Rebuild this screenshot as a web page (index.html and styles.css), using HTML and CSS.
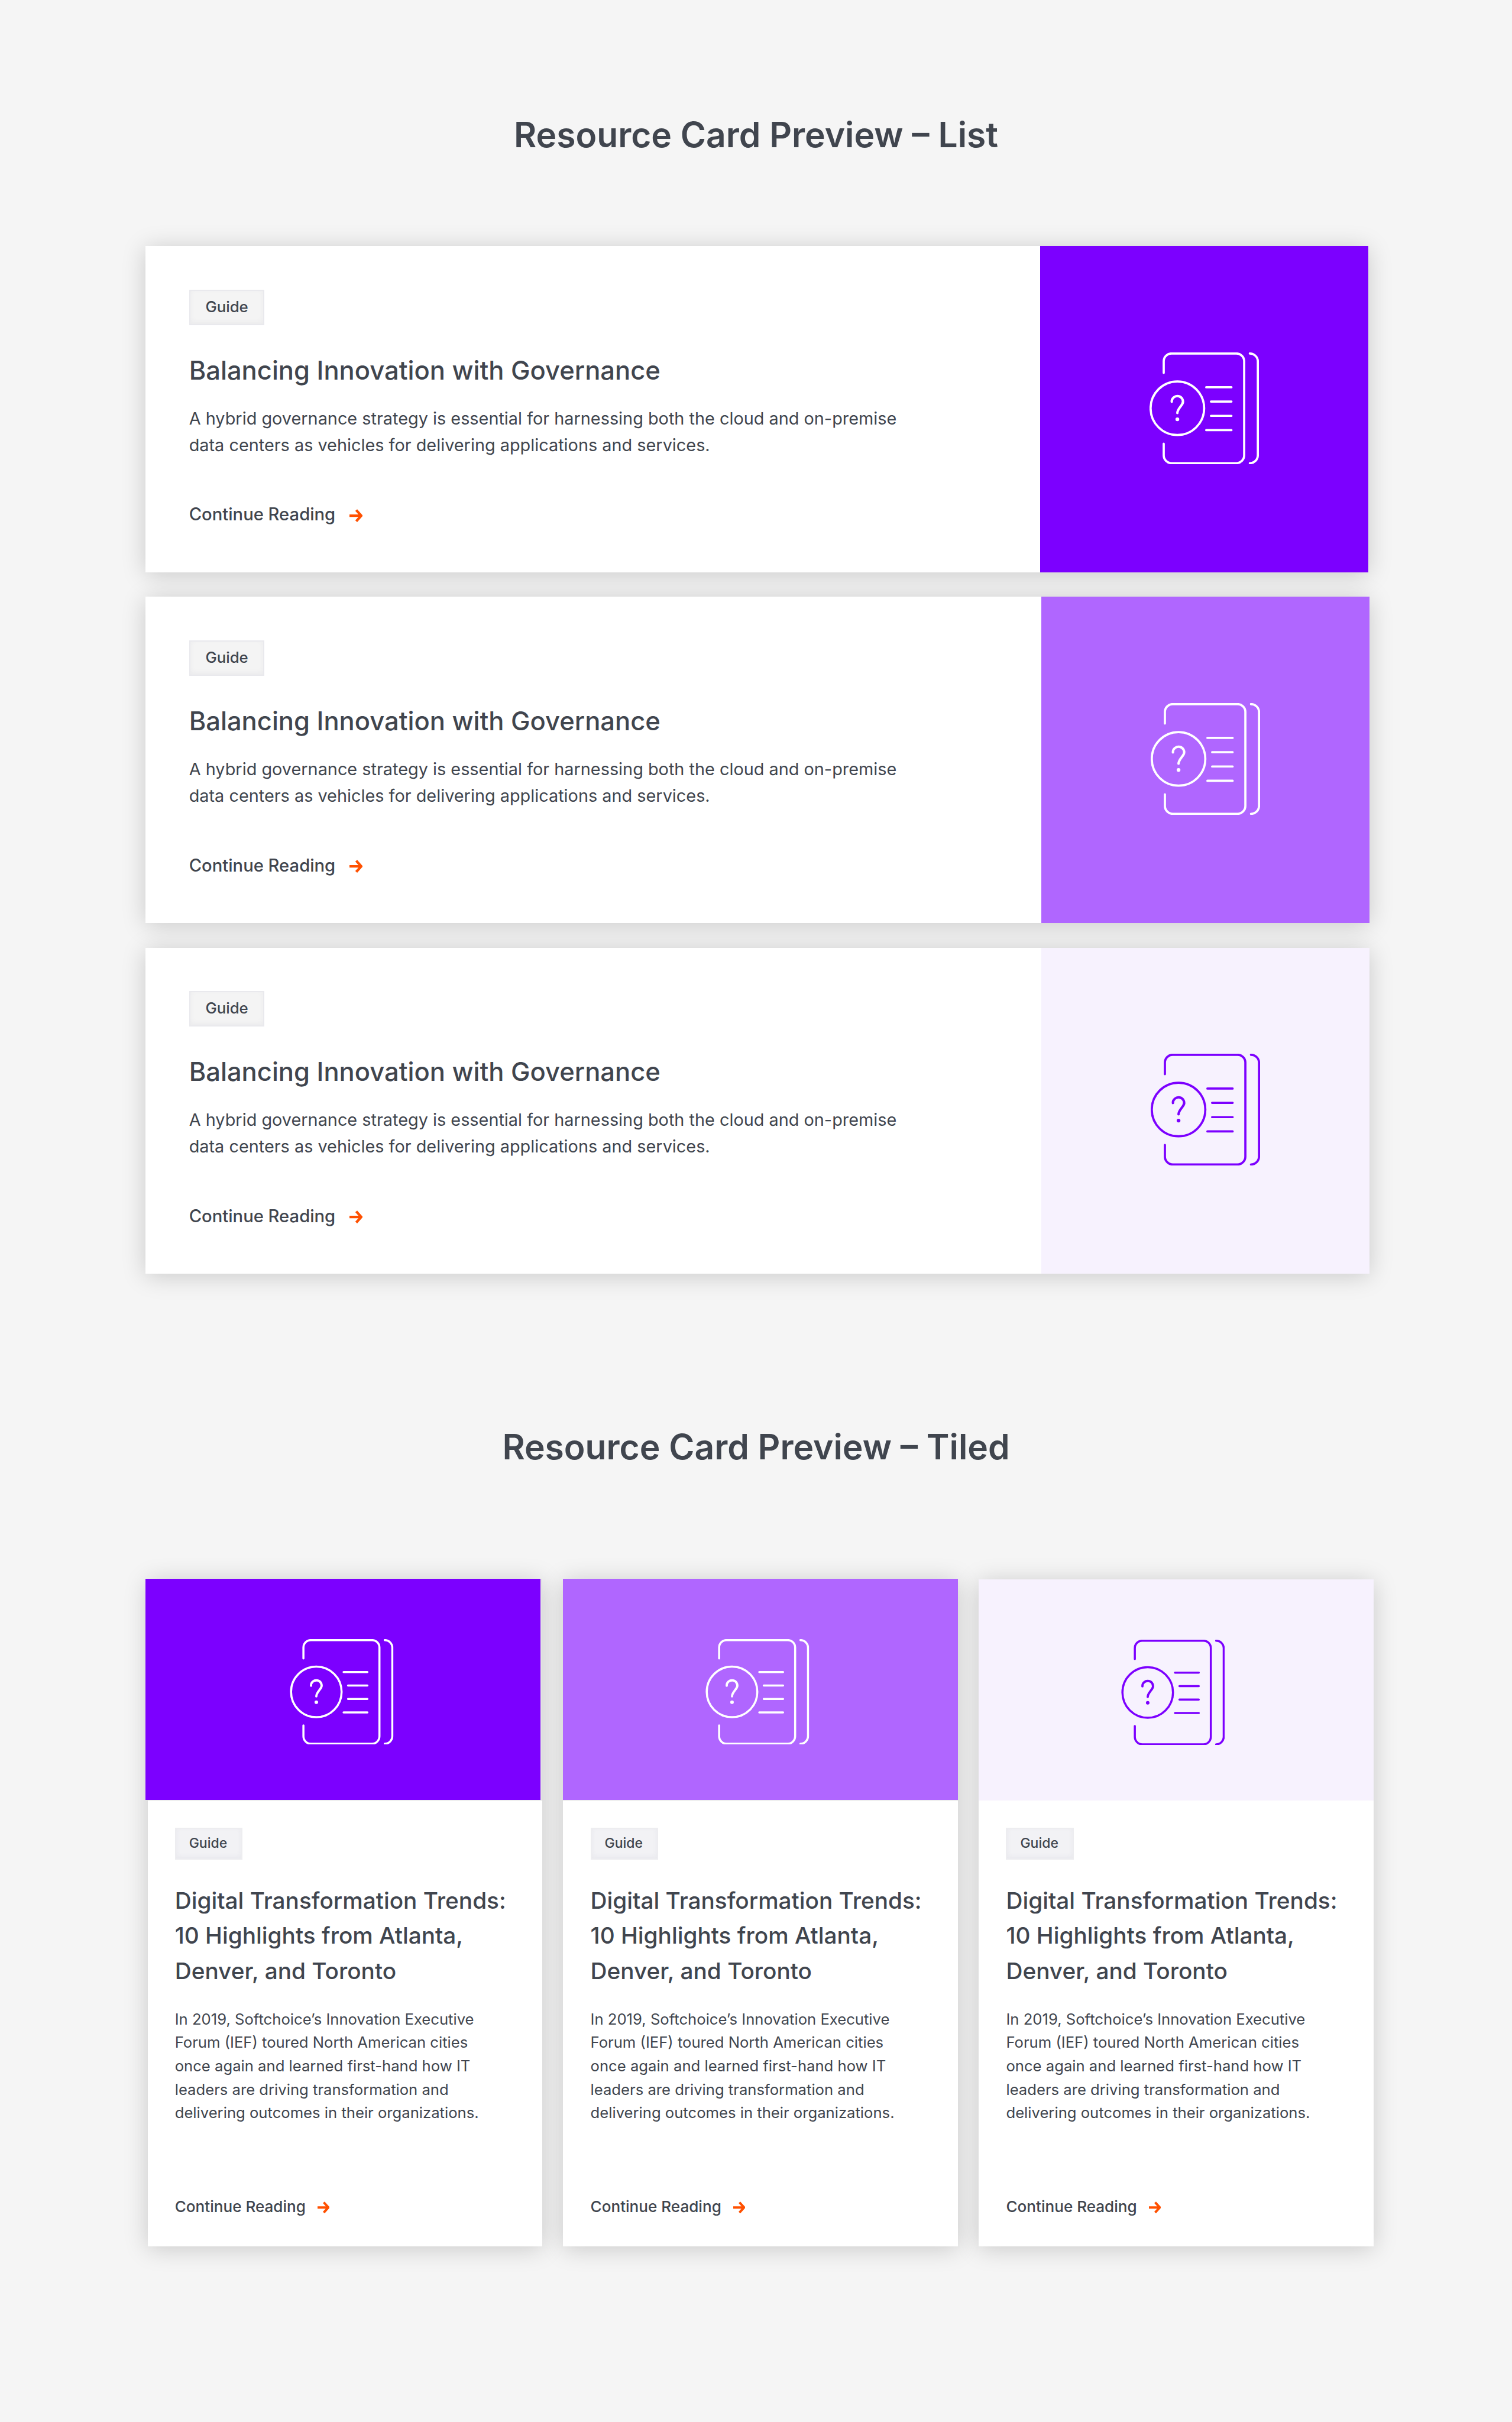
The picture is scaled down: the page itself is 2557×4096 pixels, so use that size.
FILE: index.html
```
<!DOCTYPE html>
<html lang="en">
<head>
<meta charset="utf-8">
<title>Resource Card Preview</title>
<link rel="stylesheet" href="styles.css">
</head>
<body>
<svg class="sprite" aria-hidden="true">
  <symbol id="guide" viewBox="12 17 208.2 213">
    <g fill="none" stroke="currentColor" stroke-width="4.2" stroke-linecap="round">
      <path d="M39 56V34a15 15 0 0 1 15-15H177.3a15 15 0 0 1 15 15V213a15 15 0 0 1-15 15H54a15 15 0 0 1-15-15V191"/>
      <path d="M203 19a15.3 15.3 0 0 1 15.3 15.3V212.7a15.3 15.3 0 0 1-15.3 15.3"/>
      <circle cx="65" cy="123.4" r="51"/>
      <path d="M120 83.4H168M129 110.6H168M129 137.8H168M120 165H168"/>
      <path stroke-width="4.6" d="M54.3 111a10.7 10.2 0 1 1 20 4.4C71.5 120.5 65 125.5 65 132.5"/>
    </g>
    <circle cx="65" cy="144.4" r="3.6" fill="currentColor"/>
  </symbol>
  <symbol id="arrow" viewBox="0 0 24.5 24.5">
    <path d="M0 12.250H21M12.6 1.800L22 12.250L12.6 22.700" fill="none" stroke="currentColor" stroke-width="4.8"/>
  </symbol>
</svg>

<main class="page">
  <h1 class="heading">Resource Card Preview – List</h1>
  <section class="list">
    <article class="card card-first">
      <div class="card-body">
        <span class="badge">Guide</span>
        <h2 class="card-title">Balancing Innovation with Governance</h2>
        <p class="card-text">A hybrid governance strategy is essential for harnessing both the cloud and on-premise<br>data centers as vehicles for delivering applications and services.</p>
        <a class="link">Continue Reading <svg class="arrow"><use href="#arrow"/></svg></a>
      </div>
      <div class="panel violet"><svg class="icon"><use href="#guide"/></svg></div>
    </article>
    <article class="card">
      <div class="card-body">
        <span class="badge">Guide</span>
        <h2 class="card-title">Balancing Innovation with Governance</h2>
        <p class="card-text">A hybrid governance strategy is essential for harnessing both the cloud and on-premise<br>data centers as vehicles for delivering applications and services.</p>
        <a class="link">Continue Reading <svg class="arrow"><use href="#arrow"/></svg></a>
      </div>
      <div class="panel orchid"><svg class="icon"><use href="#guide"/></svg></div>
    </article>
    <article class="card">
      <div class="card-body">
        <span class="badge">Guide</span>
        <h2 class="card-title">Balancing Innovation with Governance</h2>
        <p class="card-text">A hybrid governance strategy is essential for harnessing both the cloud and on-premise<br>data centers as vehicles for delivering applications and services.</p>
        <a class="link">Continue Reading <svg class="arrow"><use href="#arrow"/></svg></a>
      </div>
      <div class="panel mist"><svg class="icon"><use href="#guide"/></svg></div>
    </article>
  </section>

  <h1 class="heading heading-tiled">Resource Card Preview – Tiled</h1>
  <section class="tiles">
    <article class="tile tile-first">
      <div class="panel violet"><svg class="icon"><use href="#guide"/></svg></div>
      <div class="tile-body">
        <span class="badge">Guide</span>
        <h2 class="tile-title">Digital Transformation Trends:<br>10 Highlights from Atlanta,<br>Denver, and Toronto</h2>
        <p class="tile-text">In 2019, Softchoice’s Innovation Executive<br>Forum (IEF) toured North American cities<br>once again and learned first-hand how IT<br>leaders are driving transformation and<br>delivering outcomes in their organizations.</p>
        <a class="link">Continue Reading <svg class="arrow"><use href="#arrow"/></svg></a>
      </div>
    </article>
    <article class="tile">
      <div class="panel orchid"><svg class="icon"><use href="#guide"/></svg></div>
      <div class="tile-body">
        <span class="badge">Guide</span>
        <h2 class="tile-title">Digital Transformation Trends:<br>10 Highlights from Atlanta,<br>Denver, and Toronto</h2>
        <p class="tile-text">In 2019, Softchoice’s Innovation Executive<br>Forum (IEF) toured North American cities<br>once again and learned first-hand how IT<br>leaders are driving transformation and<br>delivering outcomes in their organizations.</p>
        <a class="link">Continue Reading <svg class="arrow"><use href="#arrow"/></svg></a>
      </div>
    </article>
    <article class="tile tile-last">
      <div class="panel mist"><svg class="icon"><use href="#guide"/></svg></div>
      <div class="tile-body">
        <span class="badge">Guide</span>
        <h2 class="tile-title">Digital Transformation Trends:<br>10 Highlights from Atlanta,<br>Denver, and Toronto</h2>
        <p class="tile-text">In 2019, Softchoice’s Innovation Executive<br>Forum (IEF) toured North American cities<br>once again and learned first-hand how IT<br>leaders are driving transformation and<br>delivering outcomes in their organizations.</p>
        <a class="link">Continue Reading <svg class="arrow"><use href="#arrow"/></svg></a>
      </div>
    </article>
  </section>
</main>
</body>
</html>
```
FILE: styles.css
```
* { box-sizing: border-box; }

body {
  margin: 0;
  background: #f5f5f5;
  color: #40454e;
  font-family: Inter, "Open Sans", sans-serif;
}

h1, h2, p { margin: 0; }

.sprite { display: none; }

.page {
  height: 4096px;
  padding-top: 187.9px;
}

.heading {
  font-size: 58.7px;
  line-height: 80px;
  font-weight: 600;
  text-align: center;
}

/* List cards */
.list {
  isolation: isolate;
  display: flex;
  flex-direction: column;
  gap: 41.7px;
  width: 2069.6px;
  margin: 148.5px 0 0 246px;
}

.card {
  position: relative;
  display: flex;
  height: 551.4px;
  background: #fff;
}

.card-first { width: 2067.8px; }

/* Shadows sit on a layer under every card so neighbours stay clean */
.card::before,
.tile::before {
  content: "";
  position: absolute;
  inset: 0;
  z-index: -1;
  box-shadow: 0 4px 38px rgba(0, 0, 0, .18);
}

.card-body {
  flex: 1;
  display: flex;
  flex-direction: column;
  align-items: flex-start;
  padding: 73.7px 0 0 73.7px;
  white-space: nowrap;
}

.badge {
  display: flex;
  align-items: center;
  justify-content: center;
  width: 127.8px;
  height: 59.5px;
  padding-bottom: 3px;
  background: #f4f4f4;
  border: 2px solid #e9e9ed;
  box-shadow: inset 0 -3px 8px rgba(60, 60, 90, .05);
  font-size: 25.8px;
  font-weight: 500;
}

.card-title {
  margin-top: 46.5px;
  font-size: 43.5px;
  line-height: 60px;
  font-weight: 500;
}

.card-text {
  margin-top: 30px;
  font-size: 28.85px;
  line-height: 44.7px;
}

.link {
  display: flex;
  align-items: center;
  gap: 23.5px;
  margin-top: 73px;
  font-size: 29.2px;
  line-height: 44px;
  font-weight: 500;
}

.arrow {
  width: 22.2px;
  height: 22.2px;
  margin-top: 3px;
  color: #ff5000;
}

/* Coloured panels */
.panel {
  display: flex;
  align-items: center;
  justify-content: center;
  color: #fff;
}

.violet { background: #7c00ff; }
.orchid { background: #b066ff; }
.mist { background: #f7f2fe; color: #7c00ff; }

.card .panel {
  width: 554.9px;
  padding-bottom: 3px;
}

.card .icon {
  width: 184.9px;
  height: 189.1px;
}

/* Tiled cards */
.heading-tiled { margin-top: 252.7px; }

.tiles {
  isolation: isolate;
  display: grid;
  grid-template-columns: repeat(3, 667.7px);
  gap: 35.2px;
  margin: 183px 0 0 249.5px;
}

.tile {
  position: relative;
  display: flex;
  flex-direction: column;
  height: 1129.3px;
}

.tile::before { background: #e3e3e3; }

.tile .panel {
  height: 374.7px;
  margin-bottom: .9px;
  padding: 8px 11px 0 0;
}

.tile-first .panel {
  margin-left: -3.6px;
  margin-right: 3.6px;
  padding-right: 4px;
}

.tile-last { padding-top: .9px; }
.tile-last::before { top: 1px; }
.tile-last .panel { margin-bottom: 0; }

.tile .icon {
  width: 175.6px;
  height: 178.6px;
}

.tile-body {
  flex: 1;
  display: flex;
  flex-direction: column;
  align-items: flex-start;
  padding: 46.2px 0 0 46.2px;
  background: #fff;
  white-space: nowrap;
}

.tile .badge {
  width: 114.5px;
  height: 53.3px;
  padding-right: 2px;
  background: #f2f2f5;
  border-color: #ededf0;
  font-size: 23px;
}

.tile-title {
  margin-top: 39.2px;
  font-size: 38.75px;
  line-height: 59.5px;
  font-weight: 500;
}

.tile-text {
  margin-top: 32.5px;
  font-size: 25.65px;
  line-height: 39.55px;
}

.tile .link {
  gap: 20px;
  margin-top: 118.9px;
  font-size: 26.1px;
  line-height: 40px;
}

.tile .arrow {
  width: 20.4px;
  height: 20.4px;
}
```
